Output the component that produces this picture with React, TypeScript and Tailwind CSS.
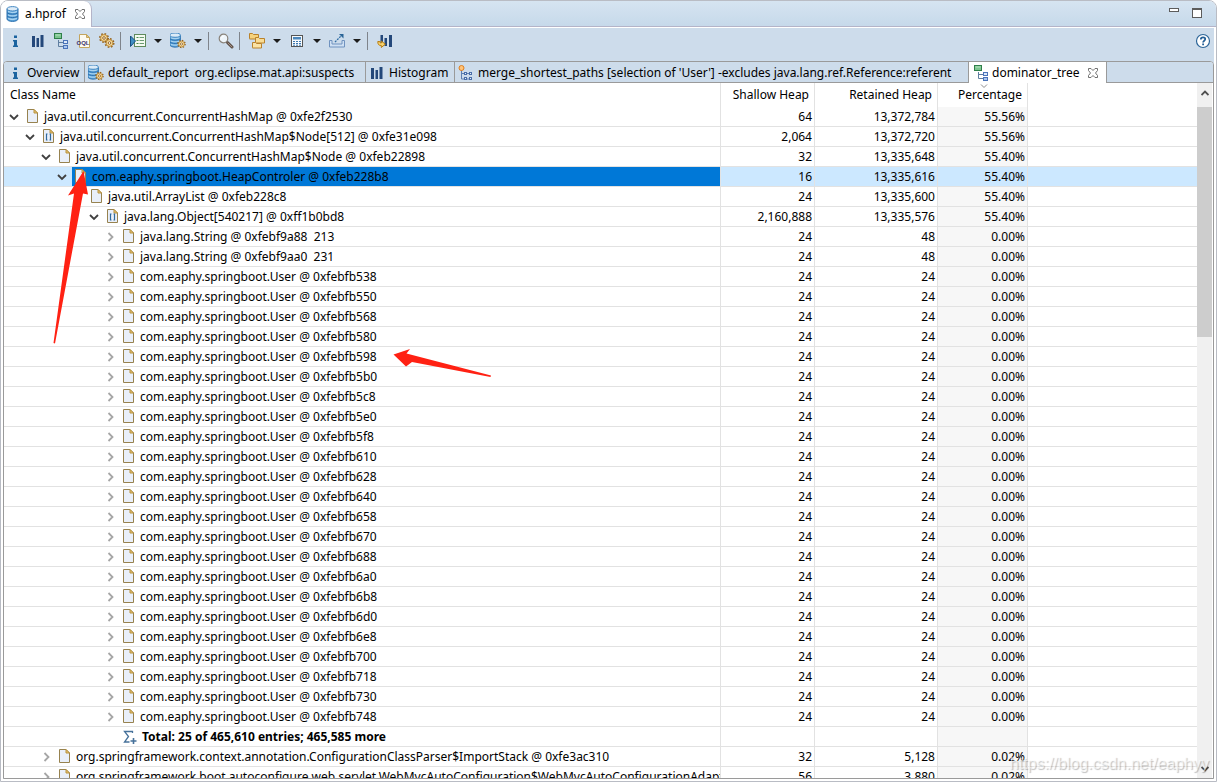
import type { ReactNode } from "react";

/* ---------- icons ---------- */

function Svg({ children }: { children: ReactNode }) {
  return (
    <svg viewBox="0 0 16 16" className="size-4 shrink-0" fill="none" aria-hidden="true">
      {children}
    </svg>
  );
}

function DatabaseShape() {
  return (
    <>
      <path d="M2 3v10c0 1.300 2.400 2.400 5.500 2.400S13 14.300 13 13V3z" fill="#5ba3d9" stroke="#2a6fae" />
      <path d="M3 4.600v1.500c2 1.600 7 1.600 9 0V4.600c-2 1.500-7 1.500-9 0zM3 8.200v1.200c2 1.600 7 1.600 9 0V8.200c-2 1.500-7 1.500-9 0zM3 11.600v1.200c2 1.600 7 1.600 9 0v-1.200c-2 1.500-7 1.500-9 0z" fill="#a9d3f0" />
      <path d="M2 6.600c1.500 2 9.500 2 11 0M2 10c1.500 2 9.500 2 11 0" stroke="#2a6fae" />
      <ellipse cx="7.500" cy="2.800" rx="5.500" ry="2.200" fill="#dcebf7" stroke="#4287c2" />
    </>
  );
}

function GearShape() {
  return (
    <>
      <circle cx="0" cy="0" r="4" stroke="#94631f" strokeWidth="2" strokeDasharray="1.570 1.570" />
      <circle cx="0" cy="0" r="3.400" fill="#f8dc9c" stroke="#b8842f" strokeWidth="0.900" />
      <circle cx="0" cy="0" r="1.300" fill="#fff" stroke="#8a5a1c" strokeWidth="0.900" />
    </>
  );
}

const DatabaseIcon = () => (
  <Svg>
    <DatabaseShape />
  </Svg>
);

const DatabaseGearIcon = () => (
  <Svg>
    <g transform="translate(-2 -0.500) scale(0.950)">
      <DatabaseShape />
    </g>
    <g transform="translate(11.500 11) scale(0.850)">
      <GearShape />
    </g>
  </Svg>
);

const GearsIcon = () => (
  <Svg>
    <g transform="translate(5 5)">
      <GearShape />
    </g>
    <g transform="translate(10.500 10)">
      <GearShape />
    </g>
  </Svg>
);

const InfoIcon = () => (
  <Svg>
    <path d="M7 2.500h3V5H7zM6 7h4v5.500h1V14H6v-1.500h1V8.500H6z" fill="#1b639f" />
  </Svg>
);

const HistogramIcon = () => (
  <Svg>
    <path d="M2 3h3v11H2zM6.500 5H9v9H6.500zM10.500 2h3v12h-3z" fill="#24487a" />
  </Svg>
);

const HistogramArrowIcon = () => (
  <Svg>
    <path d="M3.500 2H6v9H3.500zM7.500 5H10v8H7.500zM12 2h3v12h-3z" fill="#24487a" />
    <path d="M.8 8.500c0 3 1 4 3.500 4v2l4-3.300-4-3.200v2c-1.200 0-1.500-.5-1.500-1.500z" fill="#f7d36f" stroke="#b67d14" />
  </Svg>
);

const TreeIcon = () => (
  <Svg>
    <path d="M5.500 7v6.500h5M5.500 9.500h5" stroke="#5f7ea0" />
    <rect x="1.500" y="0.500" width="7" height="5" fill="#7cc58f" stroke="#2f7f4a" />
    <path d="M2.500 2h5" stroke="#b6e3c0" />
    <rect x="10.500" y="7.500" width="4" height="3" fill="#dce9fa" stroke="#4a73b8" />
    <rect x="10.500" y="12.500" width="4" height="3" fill="#a9c6f0" stroke="#4a73b8" />
  </Svg>
);

const MergeIcon = () => (
  <Svg>
    <path d="M3.500 5v9h3M3.500 8.500h3M8 8.500h4M8 14h4" stroke="#5d7fb0" />
    <circle cx="3.500" cy="3" r="2.500" fill="#ffc37a" stroke="#dd7f1e" />
    <rect x="6.500" y="7.500" width="2" height="2" fill="#e7effb" stroke="#4a6ea8" />
    <rect x="11.500" y="7.500" width="2" height="2" fill="#e7effb" stroke="#4a6ea8" />
    <rect x="6.500" y="12.500" width="2" height="2" fill="#e7effb" stroke="#4a6ea8" />
    <rect x="11.500" y="12.500" width="2" height="2" fill="#e7effb" stroke="#4a6ea8" />
  </Svg>
);

const OqlIcon = () => (
  <Svg>
    <path d="M3.500 1.500h7l3 3v10h-10z" fill="#fdfaf0" stroke="#c4a55e" />
    <path d="M10.500 1.500v3h3z" fill="#eacb7c" stroke="#c4a55e" />
    <text x="7" y="12" textAnchor="middle" fontFamily="Liberation Sans" fontSize="6" fontWeight="700" fill="#3d3570">
      OQL
    </text>
  </Svg>
);

const RunReportIcon = () => (
  <Svg>
    <rect x="4.500" y="1.500" width="11" height="12" fill="#f4faf0" stroke="#5e8a5c" />
    <path d="M6.500 4.500h2M6.500 7.500h2M6.500 10.500h2" stroke="#4a8a50" />
    <path d="M9.500 4.500H14M9.500 7.500H14M9.500 10.500H14" stroke="#6a9a72" />
    <path d="M.5 3v10.500L5.500 8z" fill="#3f8fc4" stroke="#184f80" />
  </Svg>
);

const SearchIcon = () => (
  <Svg>
    <path d="M9.500 9.500l4.500 4.500" stroke="#5e5048" strokeWidth="3" strokeLinecap="round" />
    <path d="M10 10l4 4" stroke="#a99384" strokeLinecap="round" />
    <circle cx="5.500" cy="5.500" r="4.300" fill="#eef5fa" stroke="#8a847c" strokeWidth="1.200" />
    <path d="M3.500 5.500a2.300 2.300 0 0 1 2.300-2.200" stroke="#fff" />
  </Svg>
);

const GroupIcon = () => (
  <Svg>
    <path d="M.5 5.500v-5h3l1 1h5v4.500h-9z" fill="#f6d27c" stroke="#b9822c" />
    <path d="M6.500 9.500v-5h3l1 1h5v4.500h-9z" fill="#f9dc94" stroke="#b9822c" />
    <path d="M3.500 14.500v-5h3l1 1h5v4.500h-9z" fill="#fbe3a5" stroke="#b9822c" />
  </Svg>
);

const CalculatorIcon = () => (
  <Svg>
    <rect x="2.500" y="2.500" width="11" height="11" fill="#f7fafc" stroke="#545454" />
    <rect x="4" y="4" width="8" height="2.500" fill="#4c88bd" />
    <path d="M4 8.500h8M4 10.500h8M4 12.200h8" stroke="#3c78b0" strokeDasharray="2 1" />
  </Svg>
);

const ExportIcon = () => (
  <Svg>
    <path d="M.5 7.500h2.500v3.500h10V7.500h2.500v6.500H.5z" fill="#cfe0f3" stroke="#6f92bf" />
    <path d="M6 9l6-6" stroke="#2f6ea5" strokeWidth="1.300" strokeDasharray="2 1" />
    <path d="M10 1h4.500v4.500z" fill="#2a6496" />
  </Svg>
);

const HelpIcon = () => (
  <Svg>
    <circle cx="8" cy="8" r="6.500" fill="#fff" stroke="#2d6699" strokeWidth="1.200" />
    <path d="M5.800 6.500c0-3 4.600-2.800 4.400-.2-.1 1.500-2 1.400-2.100 3.200M8.100 10.600v1.600" stroke="#245f96" strokeWidth="1.800" />
  </Svg>
);

const CloseIcon = () => (
  <svg viewBox="0 0 12 12" className="size-3 shrink-0" fill="none" aria-hidden="true">
    <path
      d="M1.500 1.500h2.500L6 3.500l2-2h2.500V3.500L8.500 6l2 2.500v2H8L6 8.500l-2 2H1.500v-2L3.500 6l-2-2.500z"
      fill="#fff"
      stroke="#717171"
    />
  </svg>
);

const PageIcon = ({ array }: { array?: boolean }) => (
  <Svg>
    <path d="M3.500.5h6.500l3.500 3.500v9.500h-10z" fill="#e9eff9" stroke="#97824f" />
    <path d="M10 .5v3.500h3.500z" fill="#e9c777" stroke="#b8923f" />
    {array && <path d="M7.500 5h-1v6h1M9.500 5h1v6h-1" stroke="#2f6a9e" strokeWidth="1.200" />}
  </Svg>
);

const SigmaIcon = () => (
  <Svg>
    <path d="M10.500 4V2.500h-8l4 5-4 5.500h5" stroke="#46719a" strokeWidth="1.300" />
    <path d="M11.500 9v6M8.500 12h6" stroke="#46719a" strokeWidth="1.600" />
  </Svg>
);

const Caret = () => (
  <svg viewBox="0 0 8 4" className="h-1 w-2" aria-hidden="true">
    <path d="M0 0h8L4 4z" fill="#1c1c1c" />
  </svg>
);

const Expander = ({ open }: { open?: boolean }) => (
  <svg viewBox="0 0 10 10" className="size-[10px]" fill="none" aria-hidden="true">
    {open ? (
      <path d="M1 3l4 4 4-4" stroke="#404040" strokeWidth="1.800" />
    ) : (
      <path d="M3.500 1l4 4-4 4" stroke="#a6a6a6" strokeWidth="1.800" />
    )}
  </svg>
);

const ScrollChevron = ({ down }: { down?: boolean }) => (
  <svg viewBox="0 0 8 6" className="h-[6px] w-2" fill="none" aria-hidden="true">
    <path d={down ? "M.5 1L4 4.500 7.500 1" : "M.5 5L4 1.500 7.500 5"} stroke="#505050" strokeWidth="1.800" />
  </svg>
);

/* ---------- data ---------- */

type Kind = "page" | "array" | "total";

interface Row {
  level: number;
  state: "open" | "closed" | "leaf";
  kind: Kind;
  name: string;
  shallow: string;
  retained: string;
  percent: string;
  selected?: boolean;
}

const userAddresses = [
  "538", "550", "568", "580", "598", "5b0", "5c8", "5e0", "5f8", "610", "628", "640",
  "658", "670", "688", "6a0", "6b8", "6d0", "6e8", "700", "718", "730", "748",
];

const rows: Row[] = [
  { level: 0, state: "open", kind: "page", name: "java.util.concurrent.ConcurrentHashMap @ 0xfe2f2530", shallow: "64", retained: "13,372,784", percent: "55.56%" },
  { level: 1, state: "open", kind: "array", name: "java.util.concurrent.ConcurrentHashMap$Node[512] @ 0xfe31e098", shallow: "2,064", retained: "13,372,720", percent: "55.56%" },
  { level: 2, state: "open", kind: "page", name: "java.util.concurrent.ConcurrentHashMap$Node @ 0xfeb22898", shallow: "32", retained: "13,335,648", percent: "55.40%" },
  { level: 3, state: "open", kind: "page", name: "com.eaphy.springboot.HeapControler @ 0xfeb228b8", shallow: "16", retained: "13,335,616", percent: "55.40%", selected: true },
  { level: 4, state: "leaf", kind: "page", name: "java.util.ArrayList @ 0xfeb228c8", shallow: "24", retained: "13,335,600", percent: "55.40%" },
  { level: 5, state: "open", kind: "array", name: "java.lang.Object[540217] @ 0xff1b0bd8", shallow: "2,160,888", retained: "13,335,576", percent: "55.40%" },
  { level: 6, state: "closed", kind: "page", name: "java.lang.String @ 0xfebf9a88  213", shallow: "24", retained: "48", percent: "0.00%" },
  { level: 6, state: "closed", kind: "page", name: "java.lang.String @ 0xfebf9aa0  231", shallow: "24", retained: "48", percent: "0.00%" },
  ...userAddresses.map(
    (a): Row => ({ level: 6, state: "closed", kind: "page", name: `com.eaphy.springboot.User @ 0xfebfb${a}`, shallow: "24", retained: "24", percent: "0.00%" }),
  ),
  { level: 6, state: "leaf", kind: "total", name: "Total: 25 of 465,610 entries; 465,585 more", shallow: "", retained: "", percent: "" },
  { level: 2, state: "closed", kind: "page", name: "org.springframework.context.annotation.ConfigurationClassParser$ImportStack @ 0xfe3ac310", shallow: "32", retained: "5,128", percent: "0.02%" },
  { level: 2, state: "closed", kind: "page", name: "org.springframework.boot.autoconfigure.web.servlet.WebMvcAutoConfiguration$WebMvcAutoConfigurationAdapter @ 0xfe3ac5d0", shallow: "56", retained: "3,880", percent: "0.02%" },
];

/* ---------- parts ---------- */

function ToolButton({ label, menu, children }: { label: string; menu?: boolean; children: ReactNode }) {
  return (
    <>
      <button type="button" aria-label={label} className="flex h-6 w-[23px] items-center justify-center">
        {children}
      </button>
      {menu && (
        <button type="button" aria-label={`${label} menu`} className="flex h-6 w-[17px] items-center justify-center">
          <Caret />
        </button>
      )}
    </>
  );
}

const Divider = () => (
  <span className="flex w-2 pl-[2px]">
    <span className="h-[18px] w-px bg-[#7f848b]" />
  </span>
);

function Tab({ icon, width, children }: { icon: ReactNode; width: string; children: ReactNode }) {
  return (
    <button
      type="button"
      role="tab"
      aria-selected="false"
      className={`${width} flex shrink-0 items-center gap-1 border-r border-b border-[#9a9a9a] pt-px pl-[3px] whitespace-pre`}
    >
      {icon}
      {children}
    </button>
  );
}

function TreeRow({ row }: { row: Row }) {
  const total = row.kind === "total";
  const cell = "border-r border-b border-[#e2e2e2] pr-[2px] text-right";
  return (
    <tr className={row.selected ? "h-5 bg-[#cce8ff]" : "h-5"} aria-selected={row.selected}>
      <td className="border-r border-b border-[#e2e2e2]">
        <div className="flex h-[19px] items-center overflow-hidden whitespace-pre" style={{ paddingLeft: row.level * 16 }}>
          {row.state === "leaf" ? (
            <span className="w-5 shrink-0" />
          ) : (
            <button type="button" aria-label={row.state === "open" ? "Collapse" : "Expand"} className="flex w-5 shrink-0 items-center justify-center">
              <Expander open={row.state === "open"} />
            </button>
          )}
          <div className={`flex h-[19px] grow items-center gap-1 ${row.selected ? "bg-[#0078d7]" : ""} ${total ? "pl-[2px]" : ""}`}>
            {total ? <SigmaIcon /> : <PageIcon array={row.kind === "array"} />}
            <span className={total ? "font-bold" : ""}>{row.name}</span>
          </div>
        </div>
      </td>
      <td className={cell}>{row.shallow}</td>
      <td className={cell}>{row.retained}</td>
      <td className={row.selected ? cell : `${cell} bg-[#f7f7f7]`}>{row.percent}</td>
      <td className="border-b border-[#e2e2e2]" />
    </tr>
  );
}

/* ---------- page ---------- */

export default function App() {
  return (
    <div className="flex h-screen flex-col overflow-hidden rounded-t-lg border border-[#b9bcc4] bg-white font-['Noto_Sans',sans-serif] text-[12px] leading-[18px] text-black">
      <header className="flex h-[26px] shrink-0 border-b border-[#b4b4c8] bg-linear-to-b from-[#d6e4f1] to-[#c6d9ea]">
        <div className="-mb-px flex w-[91px] items-center gap-1 rounded-tr-lg border-r border-[#b4b4c8] bg-white pl-1">
          <DatabaseIcon />
          <span>a.hprof</span>
          <button type="button" aria-label="Close a.hprof" className="ml-1">
            <CloseIcon />
          </button>
        </div>
        <div className="ml-auto flex items-start gap-[13px] pt-[7px] pr-[14px]">
          <button type="button" aria-label="Minimize" className="h-1 w-[10px] border border-[#5c5c5c] bg-white" />
          <button type="button" aria-label="Maximize" className="h-[10px] w-[10px] border border-t-2 border-[#5c5c5c] bg-white" />
        </div>
      </header>

      <main className="flex min-h-0 grow flex-col px-[2px] pt-px pb-[2px]">
        <div className="flex min-h-0 grow flex-col bg-[#cddceb]">
          <div role="toolbar" aria-label="Heap dump tools" className="flex h-[33px] shrink-0 items-center pb-[7px]">
            <ToolButton label="Overview"><InfoIcon /></ToolButton>
            <ToolButton label="Histogram"><HistogramIcon /></ToolButton>
            <ToolButton label="Dominator tree"><TreeIcon /></ToolButton>
            <ToolButton label="OQL"><OqlIcon /></ToolButton>
            <ToolButton label="Thread overview"><GearsIcon /></ToolButton>
            <Divider />
            <ToolButton label="Run report" menu><RunReportIcon /></ToolButton>
            <ToolButton label="Query browser" menu><DatabaseGearIcon /></ToolButton>
            <Divider />
            <ToolButton label="Find object"><SearchIcon /></ToolButton>
            <Divider />
            <ToolButton label="Group result" menu><GroupIcon /></ToolButton>
            <ToolButton label="Calculate retained size" menu><CalculatorIcon /></ToolButton>
            <ToolButton label="Export" menu><ExportIcon /></ToolButton>
            <Divider />
            <ToolButton label="Compare"><HistogramArrowIcon /></ToolButton>
            <div className="ml-auto">
              <ToolButton label="Help"><HelpIcon /></ToolButton>
            </div>
          </div>

          <section className="flex min-h-0 grow flex-col overflow-hidden rounded-t border border-[#9a9a9a] bg-white">
            <div role="tablist" className="flex h-[21px] shrink-0 bg-[#cddceb]">
              <Tab icon={<InfoIcon />} width="w-[81px]">Overview</Tab>
              <Tab icon={<DatabaseGearIcon />} width="w-[281px]">{"default_report  org.eclipse.mat.api:suspects"}</Tab>
              <Tab icon={<HistogramIcon />} width="w-[89px]">Histogram</Tab>
              <Tab icon={<MergeIcon />} width="w-[514px]">{"merge_shortest_paths [selection of 'User'] -excludes java.lang.ref.Reference:referent"}</Tab>
              <div role="tab" aria-selected="true" className="flex w-[138px] shrink-0 items-center gap-[3px] border-r border-[#9a9a9a] bg-white pl-1">
                <TreeIcon />
                <span>dominator_tree</span>
                <button type="button" aria-label="Close dominator_tree" className="ml-1">
                  <CloseIcon />
                </button>
              </div>
              <div className="grow border-b border-[#9a9a9a]" />
            </div>

            <div className="relative flex min-h-0 grow overflow-hidden">
              <div className="min-w-0 grow overflow-hidden">
                <table className="w-full table-fixed border-separate border-spacing-0">
                  <colgroup>
                    <col className="w-[717px]" />
                    <col className="w-[94px]" />
                    <col className="w-[123px]" />
                    <col className="w-[90px]" />
                    <col />
                  </colgroup>
                  <thead>
                    <tr className="h-6">
                      <th className="border-r border-[#e2e2e2] pl-[6px] text-left font-normal">Class Name</th>
                      <th className="border-r border-[#e2e2e2] pr-[5px] text-right font-normal">Shallow Heap</th>
                      <th className="border-r border-[#e2e2e2] pr-[5px] text-right font-normal">Retained Heap</th>
                      <th aria-sort="descending" className="relative border-r border-[#e2e2e2] pr-[5px] text-right font-normal">
                        <svg viewBox="0 0 8 5" className="absolute top-px left-[42px] h-[5px] w-2" fill="none" aria-hidden="true">
                          <path d="M1 .5l3 3 3-3" stroke="#8c8c8c" />
                        </svg>
                        Percentage
                      </th>
                      <td />
                    </tr>
                  </thead>
                  <tbody>
                    {rows.map((row) => (
                      <TreeRow key={row.name} row={row} />
                    ))}
                  </tbody>
                </table>
              </div>

              <div className="mr-px flex w-[15px] shrink-0 flex-col items-center bg-[#f0f0f0]">
                <button type="button" aria-label="Scroll up" className="flex h-6 w-full items-center justify-center pb-1">
                  <ScrollChevron />
                </button>
                <div className="h-[230px] w-full bg-[#cdcdcd]" />
                <button type="button" aria-label="Scroll down" className="mt-auto flex h-[18px] w-full items-center justify-center">
                  <ScrollChevron down />
                </button>
              </div>

              <svg viewBox="0 0 40 180" className="pointer-events-none absolute top-[83px] left-[46px] h-[180px] w-10" aria-hidden="true">
                <path d="M33.500 5L18 29.500l6-2L3.500 177l1.500.5L33 27.500l5 1z" fill="#ff2113" />
              </svg>
              <svg viewBox="0 0 100 30" className="pointer-events-none absolute top-[265px] left-[389px] h-[30px] w-[100px]" aria-hidden="true">
                <path d="M.5 6.500L17 1l-3.500 4.500L98 27.500l-.5 1.500L19 14l-6 4.500z" fill="#ff2113" />
              </svg>
              <span className="pointer-events-none absolute right-1 bottom-[5px] font-['Liberation_Sans',sans-serif] text-[16px] text-white/60 [text-shadow:1px_1px_1px_rgba(0,0,0,0.25)]">
                https://blog.csdn.net/eaphyy
              </span>
            </div>
          </section>
        </div>
      </main>
    </div>
  );
}
